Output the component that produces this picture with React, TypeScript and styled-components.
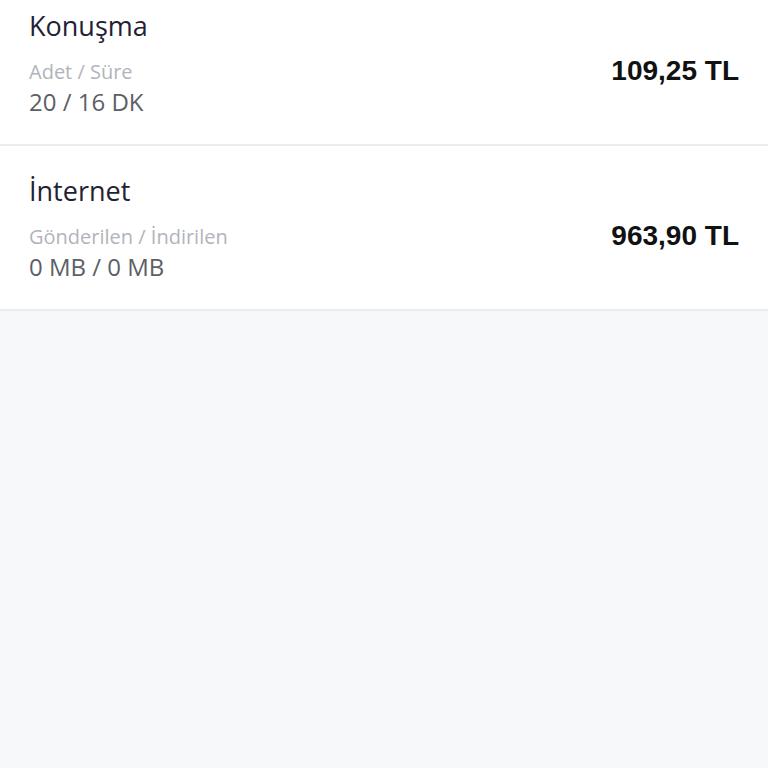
import styled, { createGlobalStyle } from "styled-components";

const GlobalStyle = createGlobalStyle`
  html, body {
    margin: 0;
    padding: 0;
    background: #f7f8fa;
  }
  body {
    font-family: "Open Sans", "Noto Sans", sans-serif;
    height: 768px;
    overflow: hidden;
  }
`;

type Usage = {
  title: string;
  label: string;
  value: string;
  price: string;
};

const usages: Usage[] = [
  { title: "Konuşma", label: "Adet / Süre", value: "20 / 16 DK", price: "109,25 TL" },
  { title: "İnternet", label: "Gönderilen / İndirilen", value: "0 MB / 0 MB", price: "963,90 TL" },
];

const App = () => {
  return (
    <>
      <GlobalStyle />
      <Page>
        {/* list is scrolled a bit, first row is partly above the top */}
        <List>
          {usages.map((u) => (
            <Row key={u.title}>
              <Info>
                <Title>{u.title}</Title>
                <Label>{u.label}</Label>
                <Value>{u.value}</Value>
              </Info>
              <Price>{u.price}</Price>
            </Row>
          ))}
        </List>
      </Page>
    </>
  );
};

const Page = styled.div`
  width: 768px;
  height: 768px;
  background: #f7f8fa;
  overflow: hidden;
`;

const List = styled.div`
  display: flex;
  flex-direction: column;
  margin-top: -19px;
`;

const Row = styled.div`
  height: 165px;
  box-sizing: border-box;
  background: #ffffff;
  border-bottom: 2px solid #ebecef;
  display: flex;
  align-items: flex-start;
  justify-content: space-between;
  padding: 28px 29px 0 29px;
`;

const Info = styled.div`
  display: flex;
  flex-direction: column;
`;

const Title = styled.div`
  font-size: 27px;
  line-height: 34px;
  color: #1f2233;
  font-weight: 500;
`;

const Label = styled.div`
  margin-top: 17px;
  font-size: 20px;
  line-height: 24px;
  color: #b1b4bb;
`;

const Value = styled.div`
  margin-top: 4px;
  font-size: 24px;
  line-height: 28px;
  color: #5c5f67;
`;

const Price = styled.div`
  margin-top: 46px;
  font-family: "Liberation Sans", Arial, sans-serif;
  font-weight: 700;
  font-size: 28px;
  line-height: 32px;
  color: #111111;
`;

export default App;
